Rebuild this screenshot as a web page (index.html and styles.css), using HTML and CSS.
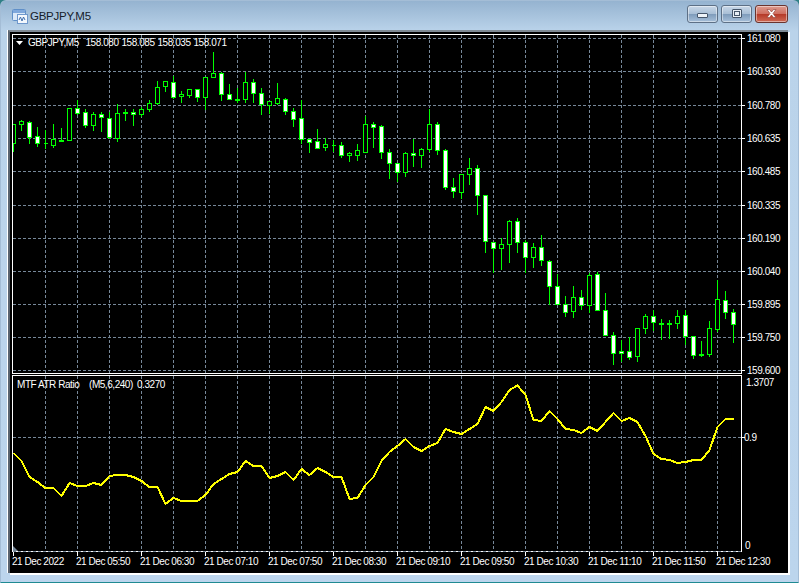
FILE: index.html
```html
<!DOCTYPE html>
<html lang="en">
<head>
<meta charset="utf-8">
<title>GBPJPY,M5</title>
<link rel="stylesheet" href="styles.css">
</head>
<body>
<div class="window">
  <header class="titlebar">
    <svg class="app-icon" width="17" height="16" viewBox="0 0 17 16">
      <rect x="1.500" y="1.500" width="13" height="11" rx="1" fill="#dbe9f8" stroke="#5f8fc8"/>
      <rect x="2" y="2" width="12" height="3" fill="#7fa8dc"/>
      <rect x="6.500" y="6.500" width="10" height="9" fill="#f4f8fd" stroke="#6f98cc"/>
      <path d="M8 12l1.500-3 1.500 4 1.500-4 1.500 3" fill="none" stroke="#3f6fae"/>
    </svg>
    <span class="title">GBPJPY,M5</span>
    <div class="controls">
      <button class="ctl ctl-min" aria-label="Minimize"><span class="glyph-min"></span></button>
      <button class="ctl ctl-max" aria-label="Maximize"><span class="glyph-max"></span></button>
      <button class="ctl ctl-close" aria-label="Close">
        <svg width="15" height="11" viewBox="0 0 15 11"><path d="M3 1.500h2.500L7.500 4l2-2.500H12L9 5.500l3 4H9.500l-2-2.500-2 2.500H3l3-4z" fill="#fff" stroke="#8a3a30" stroke-width=".6"/></svg>
      </button>
    </div>
  </header>
  <main class="client">
    <svg id="chart" class="chart" width="778" height="541" viewBox="0 0 778 541">
      <g transform="translate(-10 -32)">
        <g id="grid"></g>
        <g id="candles"></g>
        <polyline id="atr" class="atr" points=""/>
        <path class="frame" d="M12.500 34.500H741.500V373.500H12.500ZM12.500 375.500H741.500V551.500H12.500Z"/>
        <path class="grid-line" d="M13 551.500H741"/>
        <polygon class="shift" points="13,546 13,551 18,551"/>
        <g id="ticks"></g>
        <polygon class="caret" points="16,41 23,41 19.500,45"/>
        <g class="label">
          <text x="28" y="46">GBPJPY,M5</text>
          <text x="85.500" y="46">158.080</text>
          <text x="121.500" y="46">158.085</text>
          <text x="157.500" y="46">158.035</text>
          <text x="193.500" y="46">158.071</text>
          <text x="17" y="388">MTF ATR Ratio</text>
          <text x="89" y="388">(M5,6,240)</text>
          <text x="137" y="388">0.3270</text>
        </g>
        <g class="label">
          <text x="747" y="42">161.080</text>
          <text x="747" y="75">160.930</text>
          <text x="747" y="109">160.780</text>
          <text x="747" y="142">160.635</text>
          <text x="747" y="175">160.485</text>
          <text x="747" y="209">160.335</text>
          <text x="747" y="242">160.190</text>
          <text x="747" y="275">160.040</text>
          <text x="747" y="308">159.895</text>
          <text x="747" y="341">159.750</text>
          <text x="747" y="374">159.600</text>
          <text x="746" y="386">1.3707</text>
          <text x="744" y="441">0.9</text>
          <text x="745" y="549">0</text>
        </g>
        <g class="label">
          <text x="12" y="565">21 Dec 2022</text>
          <text x="76" y="565">21 Dec 05:50</text>
          <text x="140" y="565">21 Dec 06:30</text>
          <text x="204" y="565">21 Dec 07:10</text>
          <text x="268" y="565">21 Dec 07:50</text>
          <text x="332" y="565">21 Dec 08:30</text>
          <text x="396" y="565">21 Dec 09:10</text>
          <text x="460" y="565">21 Dec 09:50</text>
          <text x="524" y="565">21 Dec 10:30</text>
          <text x="588" y="565">21 Dec 11:10</text>
          <text x="652" y="565">21 Dec 11:50</text>
          <text x="716" y="565">21 Dec 12:30</text>
        </g>
      </g>
    </svg>
  </main>
</div>
<script src="chart.js"></script>
</body>
</html>
```
FILE: styles.css
```css
* { box-sizing: border-box; }
html, body { margin: 0; height: 100%; background: #2f7f86; overflow: hidden; }
.window {
  width: 799px;
  height: 583px;
  display: flex;
  flex-direction: column;
  padding: 0 9px 0 7px;
  background-image: linear-gradient(180deg, #95b3d0 0, #bad3ea 30px, #bcd5ed 100%);
  border: 1px solid #a4bdd6;
  border-bottom: 1px solid #1f8a92;
  border-radius: 6px 6px 0 0;
}
.titlebar {
  height: 29px;
  display: flex;
  align-items: center;
  flex: none;
}
.app-icon { margin: 1px 0 0 3px; flex: none; }
.title {
  margin: 1px 0 0 2px;
  font: 11.500px "Liberation Sans", Arial, sans-serif;
  color: #15202b;
  letter-spacing: -.25px;
}
.controls { margin-left: auto; display: flex; gap: 3px; margin-top: -4px; margin-right: 1px; }
.ctl {
  width: 31px;
  height: 18px;
  padding: 0;
  border: 1px solid #5d7086;
  border-radius: 3px;
  display: flex;
  align-items: center;
  justify-content: center;
  background: linear-gradient(180deg, #c9d8e8 0, #a9bfd6 48%, #7f9cbb 52%, #a7c0da 100%);
  box-shadow: inset 0 0 0 1px rgba(255,255,255,.45);
}
.ctl-close {
  width: 33px;
  border-color: #6a342e;
  background: linear-gradient(180deg, #dd9c90 0, #cf6f60 48%, #b53a28 52%, #cf6a55 100%);
}
.glyph-min { display: block; width: 11px; height: 5px; margin-top: 4px; background: #eef3f8; border: 1px solid #46566a; border-radius: 1px; }
.glyph-max { display: block; width: 10px; height: 9px; background: #e8eef5; border: 1px solid #46566a; border-radius: 1px; box-shadow: inset 0 0 0 1px #e8eef5, inset 0 0 0 2px #46566a; }
.client {
  flex: none;
  width: 780px;
  height: 543px;
  background: #000;
  border-top: 2px solid #7f8a94;
  border-left: 2px solid #5a6470;
  box-shadow: -1px 0 0 #fff, 2px 2px 0 #fff;
}
.chart { display: block; background: #000; }
.grid-line { stroke: #778899; stroke-width: 1; stroke-dasharray: 3 2; fill: none; shape-rendering: crispEdges; }
.wick { stroke: #00ff00; stroke-width: 1; fill: none; shape-rendering: crispEdges; }
.body-down { stroke: #00ff00; stroke-width: 1; fill: #fff; shape-rendering: crispEdges; }
.body-up { stroke: #00ff00; stroke-width: 1; fill: #000; shape-rendering: crispEdges; }
.atr { stroke: #ffff00; stroke-width: 2; fill: none; stroke-linejoin: round; shape-rendering: crispEdges; }
.frame { stroke: #fff; stroke-width: 1; fill: none; shape-rendering: crispEdges; }
.tick { stroke: #fff; stroke-width: 1; fill: none; shape-rendering: crispEdges; }
.shift { fill: #778899; }
.caret { fill: #fff; }
.label text { font: 10px "Liberation Sans", Arial, sans-serif; letter-spacing: -.45px; fill: #fff; }
```
FILE: chart.js
```javascript
// Candles: [wickTop, wickBottom, bodyTop, bodyBottom, kind]; kind: 1 = white, 0 = hollow.
var C = [
[124,151,124,143,0],[120,130,121,124,0],[121,143,122,137,1],[127,146,136,143,1],[130,148,143,143,1],
[124,147,139,145,0],[128,141,140,141,1],[108,140,108,140,0],[100,114,108,113,1],[109,127,112,125,1],
[112,130,114,125,0],[112,131,114,117,1],[112,138,118,137,1],[104,141,113,138,0],[109,120,112,113,1],
[109,125,112,114,1],[107,116,109,114,0],[100,111,103,109,0],[81,104,87,103,0],[81,91,81,86,0],
[76,98,82,97,1],[91,102,94,96,0],[89,97,89,95,0],[89,101,89,97,1],[77,109,77,97,0],
[52,77,73,77,0],[72,100,73,94,1],[84,99,94,99,1],[88,102,99,100,1],[72,102,82,99,0],
[79,102,82,93,1],[88,114,93,104,1],[101,113,101,105,0],[83,104,98,103,0],[98,114,99,111,1],
[108,126,111,119,1],[100,143,118,139,1],[139,152,139,142,1],[129,148,141,148,1],[138,150,144,147,0],
[140,151,145,145,1],[142,157,145,155,1],[152,161,153,155,0],[144,160,150,155,0],[116,152,124,152,0],
[122,147,124,127,1],[125,158,126,152,1],[149,178,152,163,1],[163,181,163,172,1],[152,176,153,172,0],
[139,166,153,155,1],[148,167,149,155,0],[109,151,124,149,0],[122,154,124,150,1],[149,189,150,187,1],
[178,197,187,191,1],[174,198,174,192,0],[158,184,168,174,0],[165,214,168,195,1],[195,252,195,241,1],
[242,272,242,248,1],[238,269,244,248,0],[220,262,221,244,0],[218,252,221,242,1],[240,272,242,257,1],
[243,267,247,257,0],[235,265,247,260,1],[260,304,261,286,1],[274,304,286,304,1],[296,316,304,312,1],
[286,317,297,311,0],[290,309,297,305,1],[273,312,275,305,0],[272,310,274,310,1],[293,335,310,335,1],
[332,364,335,353,1],[340,361,351,353,1],[337,359,351,357,1],[328,361,328,356,0],[314,333,316,328,0],
[310,330,316,322,1],[319,339,323,324,1],[320,338,323,324,1],[310,328,316,323,0],[310,344,315,336,1],
[336,358,336,355,1],[341,356,354,355,1],[321,356,328,354,0],[280,331,299,329,0],[291,318,300,312,1],
[309,342,312,324,1]
];
var ATR = [453,461,477,482,488,488,496,483,486,486,483,485,476,475,475,477,481,487,487,504,498,501,501,501,495,484,479,474,472,461,466,466,478,476,472,480,469,475,468,472,477,477,499,498,485,477,461,452,446,439,447,451,446,443,429,432,434,429,424,407,411,402,390,385.500,395,420,421,411,419,429,430,433,427,431,422,413,421,418,422,436,454,459,460,463,462,460,460,450,427,419,419];

var NS = "http://www.w3.org/2000/svg";
function add(parent, cls, d) {
  var p = document.createElementNS(NS, "path");
  p.setAttribute("class", cls);
  p.setAttribute("d", d);
  parent.appendChild(p);
}

var grid = document.getElementById("grid");
var H = [38,71,105,138,171,205,238,271,304,337,370];
var d = "";
H.forEach(function (y) { d += "M13 " + (y + .5) + "H741"; });
d += "M13 437.500H741";
for (var x = 45; x < 741; x += 32) {
  d += "M" + (x + .5) + " 35V373M" + (x + .5) + " 376V551";
}
add(grid, "grid-line", d);

var candles = document.getElementById("candles");
var wicks = "", white = "", hollow = "";
C.forEach(function (c, i) {
  var X = 13 + 8 * i, cx = X + .5;
  wicks += "M" + cx + " " + c[0] + "V" + (c[1] + 1);
  var l = Math.max(X - 1.5, 12.5), r = X + 2.5, t = c[2] + .5, b = c[3] + .5;
  var rect = "M" + l + " " + t + "H" + r + "V" + b + "H" + l + "Z";
  if (c[4]) white += rect; else hollow += rect;
});
add(candles, "wick", wicks);
add(candles, "body-up", hollow);
add(candles, "body-down", white);

document.getElementById("atr").setAttribute("points", ATR.map(function (y, i) {
  return (13.500 + 8 * i) + "," + y;
}).join(" "));

var t = "";
H.forEach(function (y) { t += "M742 " + (y + .5) + "H745"; });
t += "M742 437.500H745";
for (var tx = 13; tx < 741; tx += 64) t += "M" + (tx + .5) + " 552V556";
add(document.getElementById("ticks"), "tick", t);
```
